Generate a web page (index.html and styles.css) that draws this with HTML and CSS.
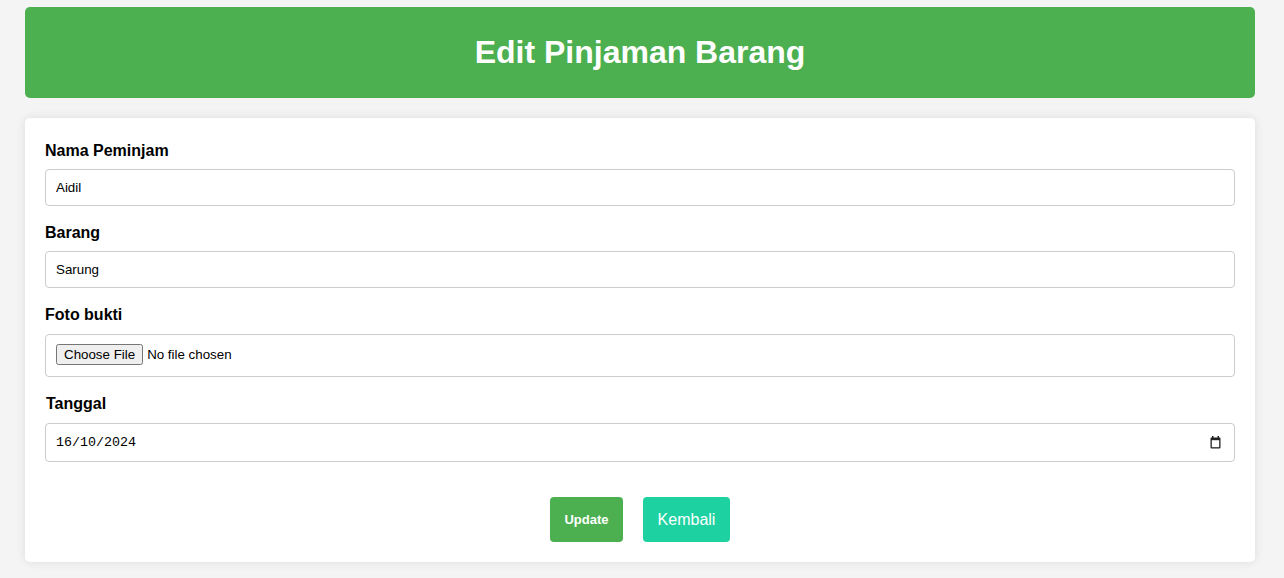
FILE: index.html
```html
<!DOCTYPE html>
<html>
<head>
<meta charset="utf-8">
<link rel="stylesheet" href="styles.css">
</head>
<body>
<div class="page">
  <header class="header">
    <h1 class="title">Edit Pinjaman Barang</h1>
  </header>
  <form class="card">
    <label class="label" for="nama">Nama Peminjam</label>
    <input class="field" id="nama" type="text" value="Aidil">
    <label class="label" for="barang">Barang</label>
    <input class="field" id="barang" type="text" value="Sarung">
    <label class="label label-foto" for="foto">Foto bukti</label>
    <input class="field field-file" id="foto" type="file">
    <label class="label label-date" for="tanggal">Tanggal</label>
    <div class="field field-date">
      <input class="date-text" id="tanggal" type="text" value="16/10/2024">
      <svg class="cal-icon" width="11" height="13" viewBox="0 0 11 13" aria-hidden="true">
        <rect x="2" y="0" width="1.5" height="2" fill="#222"/>
        <rect x="7.5" y="0" width="1.5" height="2" fill="#222"/>
        <path d="M1.5 1.5h8a1 1 0 0 1 1 1v9a1 1 0 0 1-1 1h-8a1 1 0 0 1-1-1v-9a1 1 0 0 1 1-1z" fill="#222"/>
        <rect x="1.8" y="4.2" width="7.4" height="7" fill="#fff"/>
      </svg>
    </div>
    <div class="actions">
      <button class="btn btn-update" type="button">Update</button>
      <a class="btn btn-back" href="#">Kembali</a>
    </div>
  </form>
</div>
</body>
</html>
```

FILE: styles.css
```css
* { box-sizing: border-box; }
html, body {
  margin: 0;
  padding: 0;
  background: #f4f4f4;
  font-family: "Liberation Sans", Arial, sans-serif;
}
.page {
  padding: 7px 29px 16px 25px;
  display: flex;
  flex-direction: column;
  gap: 20px;
}
.header {
  background: #4caf50;
  border-radius: 5px;
  height: 91px;
  display: flex;
  align-items: center;
  justify-content: center;
}
.title {
  margin: 0;
  color: #fff;
  font-size: 32px;
  font-weight: bold;
  line-height: 37px;
}
.card {
  background: #fff;
  border-radius: 5px;
  box-shadow: 0 0 10px rgba(0, 0, 0, 0.1);
  padding: 24px 20px 20px 20px;
  display: flex;
  flex-direction: column;
}
.label {
  display: block;
  font-size: 16px;
  font-weight: bold;
  line-height: 18px;
  color: #000;
  margin-bottom: 9px;
}
.label-foto { margin-bottom: 10px; }
.label-date { margin-left: 1px; margin-bottom: 10px; }
.field {
  display: block;
  width: 100%;
  padding: 10px;
  border: 1px solid #ccc;
  border-radius: 4px;
  font-family: "Liberation Sans", Arial, sans-serif;
  font-size: 13.33px;
  line-height: 15px;
  color: #000;
  background: #fff;
  margin-bottom: 18px;
}
.field-file {
  height: 43px;
  padding: 9px 10px;
}
.field-date {
  display: flex;
  align-items: center;
  height: 39px;
  padding: 0 13px 0 10px;
  margin-bottom: 35px;
}
.date-text {
  flex: 1;
  border: none;
  outline: none;
  padding: 0;
  margin: 0;
  background: transparent;
  font-family: "Liberation Mono", "DejaVu Sans Mono", monospace;
  font-size: 13.33px;
  color: #000;
}
.cal-icon {
  display: block;
  flex: none;
}
.actions {
  display: flex;
  justify-content: center;
  gap: 20px;
}
.btn {
  height: 45px;
  border: none;
  border-radius: 4px;
  color: #fff;
  display: flex;
  align-items: center;
  justify-content: center;
  text-decoration: none;
  font-family: "Liberation Sans", Arial, sans-serif;
  cursor: pointer;
}
.btn-update {
  background: #4caf50;
  width: 73px;
  font-size: 13px;
  font-weight: bold;
}
.btn-back {
  background: #1dd1a1;
  width: 87px;
  font-size: 16px;
}
```
